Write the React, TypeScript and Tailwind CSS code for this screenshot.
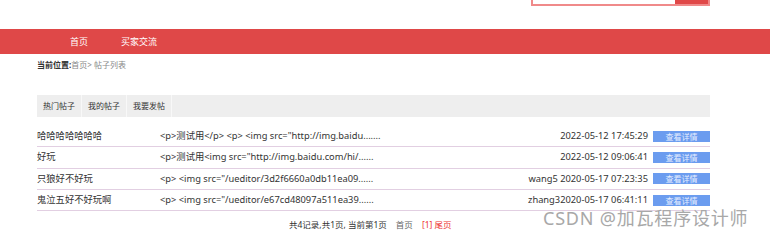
const font = { fontFamily: '"Noto Sans", "Noto Sans CJK SC", sans-serif' };

type Post = { title: string; summary: string; author: string; time: string };

const posts: Post[] = [
	{ title: "哈哈哈哈哈哈哈", summary: '<p>测试用</p> <p> <img src="http://img.baidu.......', author: "", time: "2022-05-12 17:45:29" },
	{ title: "好玩", summary: '<p>测试用<img src="http://img.baidu.com/hi/......', author: "", time: "2022-05-12 09:06:41" },
	{ title: "只狼好不好玩", summary: '<p> <img src="/ueditor/3d2f6660a0db11ea09......', author: "wang5 ", time: "2020-05-17 07:23:35" },
	{ title: "鬼泣五好不好玩啊", summary: '<p> <img src="/ueditor/e67cd48097a511ea39......', author: "zhang3", time: "2020-05-17 06:41:11" },
];

export default function App() {
	return (
		<div className="relative w-[770px] h-[246px] overflow-hidden bg-white text-[#333]" style={{ fontFamily: '"Noto Sans", "Noto Sans CJK SC", sans-serif' }}>
			{/* --top search-- */}
			<div className="h-[29px] flex justify-start">
				<div className="ml-[531px] mt-[-14px] w-[179px] h-[20px] flex border-2 border-[#f08a8a] bg-white">
					<div className="flex-1 pl-2 text-[8px] leading-[14px] text-[#bbb]">关键词搜索</div>
					<button className="w-[33px] bg-[#e04848] text-white text-[8px] leading-[14px]">搜索</button>
				</div>
			</div>
			{/* --nav bar-- */}
			<div className="h-[25px] bg-[#df4848] flex items-center text-white text-[9px]">
				<span className="ml-[70px]">首页</span>
				<span className="ml-[33px]">买家交流</span>
			</div>
			{/* --breadcrumb-- */}
			<div className="ml-[37px] mt-[6px] h-[10px] text-[8px] leading-[10px]">
				<span className="font-bold text-[#333]">当前位置:</span>
				<span className="text-[#888]">首页&gt; 帖子列表</span>
			</div>
			{/* --tabs-- */}
			<div className="ml-[37px] mt-[25px] w-[673px] h-[22px] bg-[#eeeeee] flex text-[8px] text-[#333]">
				{["热门帖子", "我的帖子", "我要发帖"].map(t => (
					<div key={t} className="h-full flex items-center px-[6px] border-r border-[#f8f8f8]" style={font}>
						{t}
					</div>
				))}
			</div>
			{/* --post list-- */}
			<div className="ml-[37px] mt-[9px] w-[673px] text-[9.3px]">
				{posts.map(p => (
					<div key={p.title} className="h-[21.3px] flex items-center border-b border-[#e2cfe2]">
						<div className="w-[123px] shrink-0 text-[#333]">{p.title}</div>
						<div className="flex-1 text-[#333]">{p.summary}</div>
						<div className="shrink-0 text-right mr-[5px]">
							{p.author}
							{p.time}
						</div>
						<button className="w-[57px] h-[11px] bg-[#6b9cef] text-[#e6eeff] text-[8px] leading-[11px] shrink-0">查看详情</button>
					</div>
				))}
			</div>
			{/* --pagination-- */}
			<div className="ml-[289px] mt-[8px] flex items-center text-[8.5px]">
				<span className="text-[#333]">共4记录,共1页, 当前第1页</span>
				<span className="ml-[9px] text-[#666]">首页</span>
				<span className="ml-[9px] text-[#e33]">[1] 尾页</span>
			</div>
			{/* --watermark-- */}
			<div className="absolute left-[543px] top-[205px] text-[18px] text-[#a8a8a8] tracking-[0.8px]" style={{ textShadow: "0 0 1px #fff" }}>
				CSDN @加瓦程序设计师
			</div>
		</div>
	);
}
